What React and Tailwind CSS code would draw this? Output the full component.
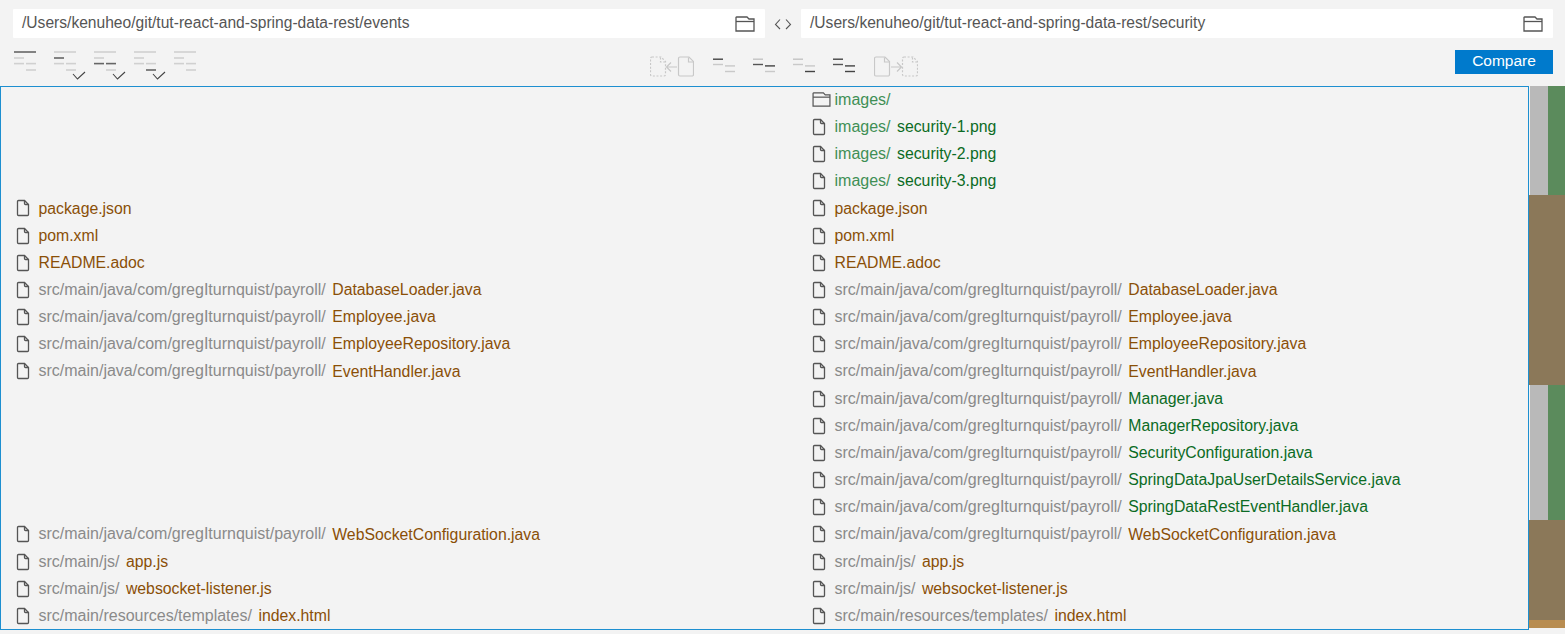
import React from "react";

const P = "src/main/java/com/gregIturnquist/payroll/";
const rows = [
  [null, ["folder", "images/", ""], "add"],
  [null, ["file", "images/", "security-1.png"], "add"],
  [null, ["file", "images/", "security-2.png"], "add"],
  [null, ["file", "images/", "security-3.png"], "add"],
  [["file", "", "package.json"], ["file", "", "package.json"], "mod"],
  [["file", "", "pom.xml"], ["file", "", "pom.xml"], "mod"],
  [["file", "", "README.adoc"], ["file", "", "README.adoc"], "mod"],
  [["file", P, "DatabaseLoader.java"], ["file", P, "DatabaseLoader.java"], "mod"],
  [["file", P, "Employee.java"], ["file", P, "Employee.java"], "mod"],
  [["file", P, "EmployeeRepository.java"], ["file", P, "EmployeeRepository.java"], "mod"],
  [["file", P, "EventHandler.java"], ["file", P, "EventHandler.java"], "mod"],
  [null, ["file", P, "Manager.java"], "add"],
  [null, ["file", P, "ManagerRepository.java"], "add"],
  [null, ["file", P, "SecurityConfiguration.java"], "add"],
  [null, ["file", P, "SpringDataJpaUserDetailsService.java"], "add"],
  [null, ["file", P, "SpringDataRestEventHandler.java"], "add"],
  [["file", P, "WebSocketConfiguration.java"], ["file", P, "WebSocketConfiguration.java"], "mod"],
  [["file", "src/main/js/", "app.js"], ["file", "src/main/js/", "app.js"], "mod"],
  [["file", "src/main/js/", "websocket-listener.js"], ["file", "src/main/js/", "websocket-listener.js"], "mod"],
  [["file", "src/main/resources/templates/", "index.html"], ["file", "src/main/resources/templates/", "index.html"], "mod"],
];

function FileIcon() {
  return (
    <svg width="14" height="18" viewBox="0 0 14 18" fill="none" stroke="#555" strokeWidth="1.3" className="shrink-0">
      <path d="M1.500 2.500a1 1 0 0 1 1-1h6l4 4v10a1 1 0 0 1-1 1h-9a1 1 0 0 1-1-1z" />
      <path d="M8.500 1.500v3a1 1 0 0 0 1 1h3" />
    </svg>
  );
}

function FolderIcon({ w = 19, h = 15, color = "#555" }) {
  return (
    <svg width={w} height={h} viewBox="0 0 20 16" fill="none" stroke={color} strokeWidth="1.3" className="shrink-0">
      <path d="M1 1.500a.5.500 0 0 1 .5-.5H12l2 2h5v12H1z" />
      <path d="M1 5.500h18" />
    </svg>
  );
}

function Check() {
  return (
    <svg width="14" height="9" viewBox="0 0 14 9" fill="none" stroke="#444" strokeWidth="1.1">
      <path d="M1 3l4.500 5L13 1" />
    </svg>
  );
}

const L = "#d0d0d0";
const D = "#666";

function FilterIcon({ dark, check }) {
  const c = (i) => (dark === i ? D : L);
  return (
    <div className="relative w-[22px] h-[32px] shrink-0">
      <svg width="22" height="22" viewBox="0 0 22 22" className="block mt-[4px]">
        <rect x="0" y="0.200" width="22" height="1.600" fill={c(0)} />
        <rect x="0" y="6.200" width="10" height="1.600" fill={c(1)} />
        <rect x="0" y="11.800" width="10" height="1.600" fill={c(2)} />
        <rect x="12" y="11.800" width="10" height="1.600" fill={c(2)} />
        <rect x="12" y="18.200" width="10" height="1.600" fill={c(3)} />
      </svg>
      {check && (
        <span className="absolute left-[18px] top-[24px]">
          <Check />
        </span>
      )}
    </div>
  );
}

function MergeIcon({ top, mid, bottom }) {
  return (
    <svg width="22" height="16" viewBox="0 0 22 16" className="block shrink-0">
      <rect x="0" y="0.500" width="10" height="1.400" fill={top ? "#444" : "#c4c4c4"} />
      <rect x="0" y="5.800" width="10" height="1.400" fill={mid || top && bottom ? "#555" : "#c9c9c9"} />
      <rect x="12" y="7.200" width="10" height="1.400" fill={mid ? "#444" : "#c9c9c9"} />
      <rect x="12" y="12.800" width="10" height="1.400" fill={bottom ? "#444" : "#c9c9c9"} />
    </svg>
  );
}

function CopyIcon({ dir }) {
  const g = "#c8c8c8";
  const doc = (x, dashed) => (
    <g transform={`translate(${x} 0)`}>
      <path
        d="M2 1h9l4.500 4.500V18.500a1.500 1.500 0 0 1-1.500 1.500H2A1.500 1.500 0 0 1 .5 18.500V2.500A1.500 1.500 0 0 1 2 1z"
        fill="none"
        stroke={g}
        strokeWidth="1.2"
        strokeDasharray={dashed ? "2 1.600" : undefined}
      />
      <path d="M10.500 1.500v4.500h4.500" fill="none" stroke={g} strokeWidth="1.2" strokeDasharray={dashed ? "2 1.600" : undefined} />
    </g>
  );
  return (
    <svg width="44" height="21" viewBox="0 0 44 21" className="block shrink-0">
      {doc(0, dir === "left")}
      {doc(28, dir !== "left")}
      {dir === "left" ? (
        <path d="M27 11H16.500M21 6.500L16.500 11l4.500 4.500" fill="none" stroke={g} strokeWidth="1.2" />
      ) : (
        <path d="M17 11h10.500M23 6.500L27.500 11 23 15.500" fill="none" stroke={g} strokeWidth="1.2" />
      )}
    </svg>
  );
}

function PathInput({ value }) {
  return (
    <div className="flex items-center justify-between h-[29px] flex-1 bg-white pl-[9px] pr-[10px] rounded-[1px]">
      <span className="text-[15.600px] leading-[20px] text-[#555] whitespace-nowrap pb-[2px]">{value}</span>
      <FolderIcon w={20} h={16} />
    </div>
  );
}

function Cell({ cell, kind }) {
  if (!cell) return <div />;
  const [icon, dir, name] = cell;
  const dirCls = dir === "images/" ? "text-[#3f8f55]" : "text-[#8a8a8a]";
  const nameCls = kind === "add" ? "text-[#0b6b24]" : "text-[#8a4f07]";
  return (
    <div className="flex items-center pl-[15px] min-w-0">
      <span className="w-[22.500px] flex shrink-0 items-center">
        {icon === "folder" ? <FolderIcon w={19} h={15} /> : <FileIcon />}
      </span>
      {dir && <span className={`${dirCls} mr-[6.500px]`}>{dir}</span>}
      {name && <span className={`${nameCls} text-[15.800px]`}>{name}</span>}
    </div>
  );
}

function Overview() {
  return (
    <div className="w-[36px] h-[548px] flex flex-col shrink-0">
      <div className="h-[109px] flex">
        <div className="w-[18px] bg-[#b9b9b9] ml-[1px]" />
        <div className="flex-1 bg-[#5b8b5c]" />
      </div>
      <div className="h-[190px] bg-[#8b7859]" />
      <div className="h-[135px] flex">
        <div className="w-[18px] bg-[#b9b9b9] ml-[1px]" />
        <div className="flex-1 bg-[#5b8b5c]" />
      </div>
      <div className="h-[100px] bg-[#8b7859]" />
      <div className="h-[8px] bg-[#b88c50]" />
    </div>
  );
}

export default function App() {
  return (
    <div
      className="w-[1565px] h-[634px] bg-[#f3f3f3] overflow-hidden flex flex-col"
      style={{ fontFamily: '"Liberation Sans", Arial, sans-serif' }}
    >
      <div className="flex items-center pl-[13px] pr-[12px] pt-[9px] h-[38px]">
        <PathInput value="/Users/kenuheo/git/tut-react-and-spring-data-rest/events" />
        <div className="w-[36px] flex items-center justify-center shrink-0">
          <svg width="18" height="12" viewBox="0 0 18 12" fill="none" stroke="#555" strokeWidth="1.1">
            <path d="M6 1.500L1.500 6.500 6 11M12 1.500l4.500 5-4.500 4.500" />
          </svg>
        </div>
        <PathInput value="/Users/kenuheo/git/tut-react-and-spring-data-rest/security" />
      </div>

      <div className="grid grid-cols-[1fr_auto_1fr] items-center pl-[14px] pr-[12px] h-[48px]">
        <div className="flex gap-[18px] h-[32px] mt-[2px]">
          <FilterIcon dark={0} />
          <FilterIcon dark={1} check />
          <FilterIcon dark={2} check />
          <FilterIcon dark={3} check />
          <FilterIcon dark={-1} />
        </div>
        <div className="flex items-center gap-[19px] mt-[8px]">
          <CopyIcon dir="left" />
          <div className="flex items-center gap-[18px]">
            <MergeIcon top />
            <MergeIcon mid />
            <MergeIcon bottom />
            <MergeIcon top mid bottom />
          </div>
          <CopyIcon dir="right" />
        </div>
        <div className="flex justify-end">
          <button className="w-[98px] h-[24px] pb-[2px] bg-[#007acc] text-white text-[15.500px] flex items-center justify-center">
            Compare
          </button>
        </div>
      </div>

      <div className="flex items-start">
        <div className="w-[1529px] h-[544px] border border-[#1d8fd0] bg-[#f3f3f3] text-[16px] overflow-hidden shrink-0">
          <div className="mt-[-0.850px]">
            {rows.map((r, i) => (
              <div key={i} className="grid grid-cols-[796px_1fr] h-[27.180px]">
                <Cell cell={r[0]} kind={r[2]} />
                <Cell cell={r[1]} kind={r[2]} />
              </div>
            ))}
          </div>
        </div>
        <Overview />
      </div>
    </div>
  );
}
